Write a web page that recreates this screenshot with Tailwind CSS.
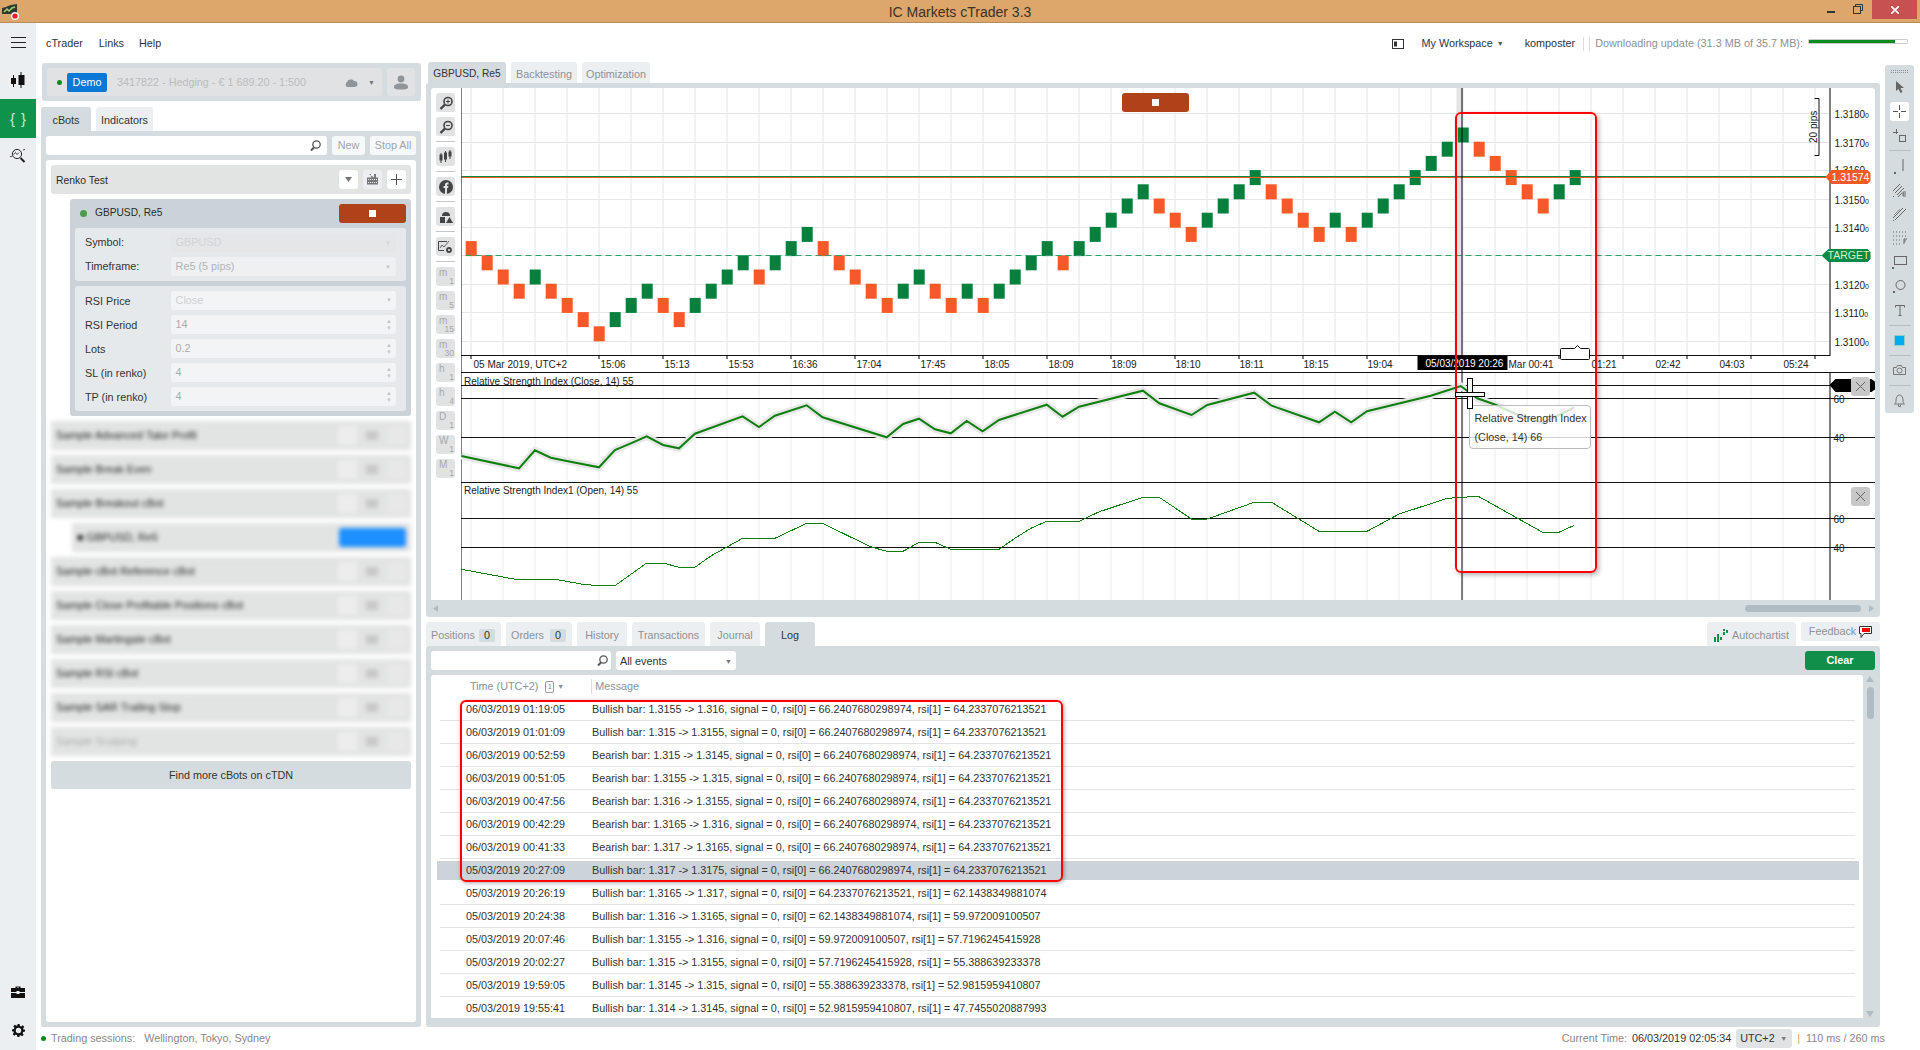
<!DOCTYPE html>
<html lang="en">
<head>
    <meta charset="UTF-8">
    <meta name="viewport" content="width=device-width, initial-scale=1.0">
    <script src="https://cdn.jsdelivr.net/npm/@tailwindcss/browser@4"></script>
    <title>IC Markets cTrader 3.3</title>
</head>
<body class="w-[1920px] h-[1050px] overflow-hidden bg-white text-[#333] text-[10.8px] leading-none font-['Liberation_Sans',sans-serif]">

    <!-- title bar -->
    <div class="h-[23px] bg-[#dda66b] border-b border-[#b58c5c] flex items-center relative">
        <svg class="w-[17px] h-[17px] ml-[2px]" viewBox="0 0 17 17">
            <path d="M0 5l4-1 2-1 3-1 6-1v10H0z" fill="#2f3b30"/>
            <path d="M2 9l3-3 2 2 3-3 3-1" fill="none" stroke="#9ccf7a" stroke-width="1.5"/>
            <circle cx="13" cy="13" r="4" fill="#f2f2f2"/>
            <circle cx="13" cy="13" r="2.6" fill="#d8232a"/>
        </svg>
        <div class="absolute left-0 right-0 pt-px text-center text-[14px] text-[#3a3226]">IC Markets cTrader 3.3</div>
        <div class="ml-auto flex items-start self-start relative">
            <div class="w-[8px] h-[2px] bg-[#333] mt-[11px] mr-[18px]"></div>
            <svg class="w-[10px] h-[10px] mt-[4px] mr-[9px]" viewBox="0 0 10 10" fill="none" stroke="#333"><path d="M2.5 2.5V.5h7v6h-2"/><rect x=".5" y="2.5" width="7" height="7"/></svg>
            <div class="w-[45px] h-[19px] mr-[3px] bg-[#c75050] flex items-center justify-center">
                <svg class="w-[8px] h-[8px]" viewBox="0 0 8 8" stroke="#fff" stroke-width="1.6"><path d="M0 0l8 8M8 0l-8 8"/></svg>
            </div>
        </div>
    </div>

    <div class="flex h-[1027px]">
        <!-- left rail -->
        <div class="w-[36px] bg-[#eceff2] flex flex-col items-center shrink-0">
            <svg class="w-[15px] h-[11px] mt-[14px]" viewBox="0 0 15 11" stroke="#222"><path d="M0 .5h15M0 5.500h15M0 10.500h15"/></svg>
            <svg class="w-[16px] h-[18px] mt-[23px]" viewBox="0 0 16 18" fill="#111"><path d="M3 4h1v3h2v6H4v3H3v-3H1V7h2z"/><path d="M10 1h1v3h3v10h-3v3h-1v-3H8V4h2z" transform="translate(.5 0)"/></svg>
            <div class="w-[36px] h-[39px] bg-[#0f9249] mt-[10px] flex items-center justify-center text-[#c8ead4] text-[15px] tracking-[6px]"><span class="ml-[6px]">{}</span></div>
            <svg class="w-[16px] h-[15px] mt-[10px]" viewBox="0 0 16 15" fill="none" stroke="#222"><circle cx="7" cy="6" r="4.6"/><path d="M3.5 6.5l2-2 1.5 2 2-2" stroke-width=".8"/><path d="M10.5 10l4 4" stroke-width="2"/><path d="M0 8.5h2M13 2l2-.5" stroke-width=".8"/></svg>
            <svg class="w-[14px] h-[12px] mt-auto" viewBox="0 0 14 12" fill="#111"><path d="M4.5 2V.5h5V2H14v4H8.5V5h-3v1H0V2zM6 1.5V2h2v-.5zM0 7h5.5v1h3V7H14v5H0z"/></svg>
            <svg class="w-[13px] h-[13px] mt-[26px] mb-[13px]" viewBox="0 0 24 24" fill="#111"><path d="M10 0h4l.6 3.4 2.3 1 2.9-2 2.8 2.8-2 2.9 1 2.3L24 10v4l-3.4.6-1 2.3 2 2.9-2.8 2.8-2.9-2-2.3 1L14 24h-4l-.6-3.4-2.3-1-2.9 2-2.8-2.8 2-2.9-1-2.3L0 14v-4l3.4-.6 1-2.3-2-2.9 2.8-2.8 2.9 2 2.3-1zM12 7a5 5 0 100 10 5 5 0 000-10z"/></svg>
        </div>

        <div class="flex-1 flex flex-col">
            <!-- menu row -->
            <div class="h-[39px] flex items-center shrink-0 pt-[2px] text-[#2b3440]">
                <span class="ml-[10px]">cTrader</span>
                <span class="ml-[16px]">Links</span>
                <span class="ml-[15px]">Help</span>
                <svg class="w-[12px] h-[10px] ml-auto" viewBox="0 0 12 10" fill="none" stroke="#333"><rect x=".5" y=".5" width="11" height="9"/><path d="M2 2.5h3v5H2z" fill="#333" stroke="none"/></svg>
                <span class="ml-[18px]">My Workspace</span>
                <span class="ml-[4px] text-[7px] text-[#555]">▼</span>
                <span class="ml-[21px]">komposter</span>
                <div class="w-px h-[14px] bg-[#ddd] ml-[8px]"></div>
                <div class="w-px h-[14px] bg-[#ddd] ml-[5px]"></div>
                <span class="ml-[5px] text-[#8b9298] tracking-[.02px]">Downloading update (31.3 MB of 35.7 MB):</span>
                <div class="w-[100px] h-[5px] ml-[5px] mr-[12px] mb-[4px] border border-[#ccc] rounded-[1px]"><div class="w-[86px] h-full bg-[#0a8a1f]"></div></div>
            </div>

            <div class="flex h-[965px]">
                <!-- cBots panel -->
                <div class="w-[380px] ml-[5px] flex flex-col shrink-0">
                    <div class="h-[38px] ml-px mt-px bg-[#d5dce0] rounded-[3px] flex items-center pl-[5px] pr-[5px] shrink-0">
                        <div class="w-[335px] h-[28px] bg-[#e0e2e4] rounded-[3px] flex items-center">
                            <div class="w-[5px] h-[5px] rounded-full bg-[#0a8a1f] ml-[10px]"></div>
                            <div class="w-[40px] h-[19px] bg-[#0a78d6] text-white rounded-[2px] flex items-center justify-center ml-[5px]">Demo</div>
                            <span class="ml-[10px] text-[#b9bdc0]">3417822 - Hedging - € 1 689.20 - 1:500</span>
                            <svg class="w-[14px] h-[9px] ml-[38px]" viewBox="0 0 14 9" fill="#8f9599"><path d="M3 9a3 3 0 010-5 4 4 0 017-1 3 3 0 011 6z"/></svg>
                            <span class="ml-[10px] text-[7px] text-[#777]">▼</span>
                        </div>
                        <div class="w-[28px] h-[28px] bg-[#e0e2e4] rounded-[3px] ml-[5px] flex items-center justify-center">
                            <svg class="w-[14px] h-[15px]" viewBox="0 0 14 15" fill="#8f9599"><circle cx="7" cy="4" r="3.4"/><path d="M0 11c1-2 4-2.500 7-2.500s6 .5 7 2.500v2c-2 2-12 2-14 0z"/></svg>
                        </div>
                    </div>

                    <div class="flex h-[24px] mt-[6px] shrink-0 pt-0">
                        <div class="w-[50px] pt-[3px] bg-[#d5dce0] rounded-t-[3px] flex items-center justify-center">cBots</div>
                        <div class="w-[57px] pt-[3px] ml-[5px] bg-[#eceff2] rounded-t-[3px] flex items-center justify-center">Indicators</div>
                    </div>

                    <div class="flex-1 bg-[#d5dce0] rounded-b-[3px] rounded-tr-[3px] p-[5px] flex flex-col">
                        <div class="flex h-[19px] shrink-0">
                            <div class="w-[281px] bg-white rounded-[3px] flex items-center justify-end pr-[6px]">
                                <svg class="w-[11px] h-[11px]" viewBox="0 0 11 11" fill="none" stroke="#555"><circle cx="6.500" cy="4.500" r="3.700" stroke-width="1.300"/><path d="M4 7.500l-3 3" stroke-width="2"/></svg>
                            </div>
                            <div class="w-[33px] ml-[5px] bg-[#f7f8f9] rounded-[3px] text-[#a0a5a8] flex items-center justify-center">New</div>
                            <div class="w-[46px] ml-[5px] bg-[#f7f8f9] rounded-[3px] text-[#a0a5a8] flex items-center justify-center">Stop All</div>
                        </div>

                        <div class="flex-1 mt-[5px] bg-white rounded-[3px] p-[5px] flex flex-col">
                            <!-- Renko Test row -->
                            <div class="h-[29px] bg-[#e2e3e3] rounded-[3px] flex items-center pl-[2px] pr-[5px] shrink-0">
                                <span class="ml-[3px] mt-[3px] text-[10.4px] text-[#2b2b2b]">Renko Test</span>
                                <div class="w-[19px] h-[19px] ml-auto bg-white rounded-[3px] flex items-center justify-center">
                                    <svg class="w-[7px] h-[5px]" viewBox="0 0 7 5" fill="#777"><path d="M0 0h7L3.500 5z"/></svg>
                                </div>
                                <div class="w-[19px] h-[19px] ml-[5px] bg-[#eceff2] rounded-[3px] flex items-center justify-center">
                                    <svg class="w-[11px] h-[11px]" viewBox="0 0 11 11" fill="#777"><path d="M2 0h2v3l1 .5H0v7h11v-7H6L7 3V0h2v3.500H7M1 5h1v1H1zm2 0h1v1H3zm2 0h1v1H5zm2 0h1v1H7zm2 0h1v1H9zM1 8h1v1H1zm2 0h1v1H3zm2 0h1v1H5zm2 0h1v1H7zm2 0h1v1H9z" fill-rule="evenodd"/></svg>
                                </div>
                                <div class="w-[19px] h-[19px] ml-[5px] bg-white rounded-[3px] flex items-center justify-center">
                                    <svg class="w-[11px] h-[11px]" viewBox="0 0 11 11" stroke="#555"><path d="M5.500 0v11M0 5.500h11"/></svg>
                                </div>
                            </div>

                            <!-- running instance -->
                            <div class="ml-[19px] mt-[5px] h-[217px] bg-[#cbd3d8] rounded-[3px] shrink-0 flex flex-col">
                                <div class="h-[29px] flex items-center pl-[10px] pr-[5px] shrink-0">
                                    <div class="w-[7px] h-[7px] rounded-full bg-[#4c9a4c]"></div>
                                    <span class="ml-[8px] text-[10.2px] text-[#2b2b2b]">GBPUSD, Re5</span>
                                    <div class="w-[67px] h-[19px] ml-auto bg-[#b0421a] rounded-[3px] flex items-center justify-center"><div class="w-[7px] h-[7px] bg-white"></div></div>
                                </div>
                                <div class="mx-[5px] h-[53px] bg-[#e6e9ec] rounded-[3px] px-[10px] pt-[5px] shrink-0">
                                    <div class="flex items-center h-[19px]">
                                        <span class="w-[87px]">Symbol:</span>
                                        <div class="w-[229px] h-[19px] bg-[#e4e6e8] rounded-[3px] flex items-center justify-between pl-[5px] pr-[5px] text-[#d2d4d6]">GBPUSD<span class="text-[6px]">▼</span></div>
                                    </div>
                                    <div class="flex items-center h-[19px] mt-[5px]">
                                        <span class="w-[87px]">Timeframe:</span>
                                        <div class="w-[229px] h-[19px] bg-[#eef0f2] rounded-[3px] flex items-center justify-between pl-[5px] pr-[5px] text-[#b0b4b7]">Re5 (5 pips)<span class="text-[6px] text-[#c4c7ca]">▼</span></div>
                                    </div>
                                </div>
                                <div id="params" class="mx-[5px] mt-[5px] h-[125px] bg-[#e6e9ec] rounded-[3px] px-[10px] pt-[5px] shrink-0 flex flex-col gap-[5px]"></div>
                            </div>

                            <!-- other cBots, blurred in the picture -->
                            <div id="blurred" class="mt-[5px] h-[336px] overflow-hidden blur-[2px] shrink-0 flex flex-col gap-[5px]"></div>

                            <div class="h-[28px] mt-[4px] bg-[#d5dce0] rounded-[3px] flex items-center justify-center shrink-0">Find more cBots on cTDN</div>
                        </div>
                    </div>
                </div>

                <!-- chart column -->
                <div class="w-[1454px] ml-[5px] flex flex-col shrink-0">
                    <div class="flex h-[21px] shrink-0 text-[#8b9298]">
                        <div class="w-[78px] ml-[2px] pt-[3px] text-[10.2px] bg-[#d5dce0] rounded-t-[3px] text-[#333] flex items-center justify-center">GBPUSD, Re5</div>
                        <div class="w-[66px] ml-[5px] pt-[3px] bg-[#eceff2] rounded-t-[3px] flex items-center justify-center">Backtesting</div>
                        <div class="w-[68px] ml-[5px] pt-[3px] bg-[#eceff2] rounded-t-[3px] flex items-center justify-center">Optimization</div>
                    </div>

                    <div class="h-[534px] bg-[#d5dce0] rounded-[3px] px-[5px] pt-[5px] shrink-0">
                        <div class="relative h-[512px] w-[1444px] bg-white rounded-t-[3px] flex">
                            <!-- chart toolbar -->
                            <div id="chart-tools" class="w-[29.500px] shrink-0 pl-[5px] pt-[5px] flex flex-col"></div>
                            <svg id="chart" class="w-[1414.500px] h-[512px] shrink-0" viewBox="460.500 88 1414.500 512" font-size="10" fill="#222"></svg>

                            <!-- overlays on the chart -->
                            <div class="absolute left-[691px] top-[5px] w-[67px] h-[19px] bg-[#b0421a] rounded-[3px] flex items-center justify-center"><div class="w-[7px] h-[7px] bg-white"></div></div>
                            <div class="absolute left-[1420px] top-[289px] w-[19px] h-[19px] bg-[#c8c8c8] rounded-[3px] flex items-center justify-center"><svg class="w-[11px] h-[11px]" viewBox="0 0 11 11" stroke="#666"><path d="M1 1l9 9M10 1l-9 9"/></svg></div>
                            <div class="absolute left-[1420px] top-[399px] w-[19px] h-[19px] bg-[#c8c8c8] rounded-[3px] flex items-center justify-center"><svg class="w-[11px] h-[11px]" viewBox="0 0 11 11" stroke="#666"><path d="M1 1l9 9M10 1l-9 9"/></svg></div>
                            <div class="absolute left-[1037.500px] top-[317px] w-[122px] h-[44px] bg-white/80 border border-[#bbb] rounded-[4px] pl-[5px] pt-[3px] leading-[19px]">Relative Strength Index<br>(Close, 14) 66</div>
                            <div class="absolute left-[1024px] top-[24px] w-[142px] h-[461px] border-[2.500px] border-[#f00] rounded-[6px] shadow-[2px_2px_5px_rgba(0,0,0,.3)]"></div>
                            <div class="absolute left-[1036px] top-[290px] w-[6px] h-[31px] bg-white border-[1.500px] border-black"></div>
                            <div class="absolute left-[1024px] top-[304px] w-[30px] h-[5px] bg-white border-[1.500px] border-black"></div>
                        </div>
                        <div class="h-[17px] relative flex items-center">
                            <svg class="w-[5px] h-[7px] ml-[2px]" viewBox="0 0 5 7" fill="#b0bcc3"><path d="M5 0v7L0 3.500z"/></svg>
                            <div class="w-[116px] h-[7px] ml-auto mr-[8px] bg-[#b0bcc3] rounded-full"></div>
                            <svg class="w-[5px] h-[7px] mr-[1px]" viewBox="0 0 5 7" fill="#b0bcc3"><path d="M0 0v7l5-3.500z"/></svg>
                        </div>
                    </div>

                    <!-- log tabs -->
                    <div class="flex h-[24px] mt-[5px] shrink-0 text-[#8b9298]">
                        <div class="w-[75px] pt-[3px] bg-[#eceff2] rounded-t-[3px] flex items-center pl-[5px]">Positions<span class="w-[16px] h-[13px] ml-auto mr-[6px] bg-[#d5dce0] rounded-[2px] text-[#333] flex items-center justify-center">0</span></div>
                        <div class="w-[66px] pt-[3px] ml-[5px] bg-[#eceff2] rounded-t-[3px] flex items-center pl-[5px]">Orders<span class="w-[16px] h-[13px] ml-auto mr-[6px] bg-[#d5dce0] rounded-[2px] text-[#333] flex items-center justify-center">0</span></div>
                        <div class="w-[50px] pt-[3px] ml-[5px] bg-[#eceff2] rounded-t-[3px] flex items-center justify-center">History</div>
                        <div class="w-[73px] pt-[3px] ml-[5px] bg-[#eceff2] rounded-t-[3px] flex items-center justify-center">Transactions</div>
                        <div class="w-[50px] pt-[3px] ml-[5px] bg-[#eceff2] rounded-t-[3px] flex items-center justify-center">Journal</div>
                        <div class="w-[50px] pt-[3px] ml-[5px] bg-[#d5dce0] rounded-t-[3px] text-[#333] flex items-center justify-center">Log</div>
                        <div class="w-[89px] pt-[3px] ml-auto bg-[#eceff2] rounded-t-[3px] flex items-center justify-center">
                            <svg class="w-[15px] h-[13px] mr-[3px]" viewBox="0 0 15 13" fill="#0f9249"><path d="M0 8h2v5H0zM3 5h2v8H3zM6 8h2v3H6zM9 0h2v2H9zM9 3h2v3H9zM12 1h2v3h-2z"/></svg>Autochartist
                        </div>
                        <div class="w-[79px] h-[19px] ml-[5px] bg-[#eceff2] rounded-[3px] flex items-center justify-center">Feedback
                            <svg class="w-[13px] h-[12px] ml-[3px]" viewBox="0 0 13 12"><path d="M.5.500h12v7H5l-3 4v-4H.5z" fill="#fff" stroke="#333"/><rect x="3" y="2" width="8" height="4" fill="#f00"/></svg>
                        </div>
                    </div>

                    <!-- log panel -->
                    <div class="relative h-[381px] bg-[#d5dce0] rounded-[3px] flex flex-col shrink-0">
                        <div class="h-[29px] flex items-center pl-[5px] pr-[5px] shrink-0">
                            <div class="w-[180px] h-[19px] bg-white rounded-[3px] flex items-center justify-end pr-[3px]">
                                <svg class="w-[11px] h-[11px]" viewBox="0 0 11 11" fill="none" stroke="#555"><circle cx="6.500" cy="4.500" r="3.700" stroke-width="1.300"/><path d="M4 7.500l-3 3" stroke-width="2"/></svg>
                            </div>
                            <div class="w-[120px] h-[19px] ml-[5px] pt-px bg-white rounded-[3px] flex items-center justify-between pl-[4px] pr-[4px]">All events<span class="text-[7px] text-[#777]">▼</span></div>
                            <div class="w-[70px] h-[19px] ml-auto bg-[#0f8f4a] rounded-[3px] text-white font-bold flex items-center justify-center">Clear</div>
                        </div>
                        <div class="flex h-[343px] shrink-0">
                            <div class="w-[1432px] ml-[5px] bg-white rounded-t-[3px] shrink-0 overflow-hidden">
                                <div class="h-[23px] flex items-center text-[#8b9298]">
                                    <span class="ml-[39px]">Time (UTC+2)</span>
                                    <span class="w-[9px] h-[12px] ml-[7px] border border-[#999] rounded-[2px] text-[8px] flex items-center justify-center">1</span>
                                    <span class="ml-[3px] text-[7px]">▼</span>
                                    <div class="w-px h-[15px] bg-[#ddd] ml-[27px]"></div>
                                    <span class="ml-[3px]">Message</span>
                                </div>
                                <div id="log" class="flex flex-col"></div>
                            </div>
                            <div class="flex-1 flex flex-col items-center pt-[1px] pr-[3px]">
                                <svg class="w-[8px] h-[6px]" viewBox="0 0 8 6" fill="#b0bcc3"><path d="M0 6h8L4 0z"/></svg>
                                <div class="w-[7px] h-[32px] mt-[5px] bg-[#b0bcc3] rounded-full"></div>
                                <svg class="w-[8px] h-[6px] mt-auto mb-[1px]" viewBox="0 0 8 6" fill="#b0bcc3"><path d="M0 0h8L4 6z"/></svg>
                            </div>
                        </div>
                        <div class="absolute left-[34px] top-[54px] w-[603px] h-[182px] border-2 border-[#f00] rounded-[6px] shadow-[1px_1px_4px_rgba(0,0,0,.35)]"></div>
                    </div>
                </div>

                <!-- drawing toolbar -->
                <div class="w-[29px] h-[348px] ml-[5px] mt-[3px] bg-[#d5dce0] rounded-[3px] flex flex-col items-center shrink-0 text-[#666]">
                    <svg class="w-[20px] h-[10px] shrink-0" viewBox="0 0 20 10" fill="#8a9298"><path d="M1 5h1v1H1zm2 0h1v1H3zm2 0h1v1H5zm2 0h1v1H7zm2 0h1v1H9zm2 0h1v1h-1zm2 0h1v1h-1zm2 0h1v1h-1zm2 0h1v1h-1zM1 7h1v1H1zm2 0h1v1H3zm2 0h1v1H5zm2 0h1v1H7zm2 0h1v1H9zm2 0h1v1h-1zm2 0h1v1h-1zm2 0h1v1h-1zm2 0h1v1h-1z"/></svg>
                    <div class="h-[24px] flex items-center justify-center"><svg class="w-[10px] h-[12px]" viewBox="0 0 10 12" fill="#666"><path d="M1 0l8 7H5.500l2 4-2 1-2-4L1 10z"/></svg></div>
                    <div class="h-[19px] w-[19px] my-[2.500px] bg-white rounded-[3px] flex items-center justify-center"><svg class="w-[13px] h-[13px]" viewBox="0 0 13 13" stroke="#555"><path d="M6.500 0v5M6.500 8v5M0 6.500h5M8 6.500h5"/></svg></div>
                    <div class="h-[24px] flex items-center justify-center"><svg class="w-[13px] h-[13px]" viewBox="0 0 13 13" fill="none" stroke="#666"><path d="M3.500 0v5M0 3.500h5"/><rect x="6.500" y="6.500" width="6" height="6"/></svg></div>
                    <div class="w-[22px] h-px bg-[#b5bdc2] my-[3px] shrink-0"></div>
                    <div class="h-[24px] flex items-center justify-center"><svg class="w-[11px] h-[15px]" viewBox="0 0 11 15" stroke="#666" fill="#666"><path d="M9 0v12" fill="none"/><rect x="0" y="13" width="2" height="2" stroke="none"/></svg></div>
                    <div class="h-[24px] flex items-center justify-center"><svg class="w-[15px] h-[14px]" viewBox="0 0 15 14" fill="none" stroke="#666"><path d="M1 8l7-7M3 10l7-7M5 12l7-7M6 14l4-4M1 14l1-1"/><path d="M11 9h3M11 11h3M11 13h3M11 9v4"/></svg></div>
                    <div class="h-[24px] flex items-center justify-center"><svg class="w-[13px] h-[13px]" viewBox="0 0 13 13" fill="none" stroke="#666"><path d="M0 10l10-10M2 12L13 1M0 13l1-1"/><path d="M1 7l6-6" stroke-width=".6"/></svg></div>
                    <div class="h-[24px] flex items-center justify-center"><svg class="w-[15px] h-[15px]" viewBox="0 0 15 15" fill="none" stroke="#666" stroke-dasharray="1 2"><path d="M1 1h14M1 5h14M1 9h9M1 13h9"/><path d="M12 8h3M12 8v5M12 10h2" stroke-dasharray="none"/></svg></div>
                    <div class="h-[24px] flex items-center justify-center"><svg class="w-[15px] h-[13px]" viewBox="0 0 15 13" fill="none" stroke="#666"><rect x="2.500" y=".5" width="12" height="8"/><rect x="0" y="11" width="2" height="2" fill="#666" stroke="none"/></svg></div>
                    <div class="h-[24px] flex items-center justify-center"><svg class="w-[13px] h-[13px]" viewBox="0 0 13 13" fill="none" stroke="#666"><circle cx="7.500" cy="5" r="4.500"/><rect x="0" y="11" width="2" height="2" fill="#666" stroke="none"/></svg></div>
                    <div class="h-[24px] flex items-center justify-center"><svg class="w-[10px] h-[11px]" viewBox="0 0 10 11" fill="none" stroke="#666"><path d="M.5 2.500V.5h9v2M5 .5v10M3.500 10.500h3"/></svg></div>
                    <div class="w-[22px] h-px bg-[#b5bdc2] my-[2.500px] shrink-0"></div>
                    <div class="h-[24px] flex items-center justify-center"><div class="w-[11px] h-[11px] bg-[#00adef] border border-[#9cc]"></div></div>
                    <div class="w-[22px] h-px bg-[#b5bdc2] my-[2.500px] shrink-0"></div>
                    <div class="h-[24px] flex items-center justify-center"><svg class="w-[13px] h-[10px]" viewBox="0 0 13 10" fill="none" stroke="#777"><path d="M.5 2.500h3l1-2h4l1 2h3v7h-12z"/><circle cx="6.500" cy="5.500" r="2.500"/></svg></div>
                    <div class="w-[22px] h-px bg-[#b5bdc2] my-[2.500px] shrink-0"></div>
                    <div class="h-[24px] flex items-center justify-center"><svg class="w-[11px] h-[13px]" viewBox="0 0 11 13" fill="none" stroke="#777"><path d="M.5 10c1.500-1 1.500-2 1.500-4 0-3 1.500-5 3.500-5s3.500 2 3.500 5c0 2 0 3 1.500 4zM4.500 10.500v2h2v-2"/></svg></div>
                </div>
            </div>

            <!-- status bar -->
            <div class="h-[23px] flex items-center text-[#888]">
                <div class="w-[5px] h-[5px] ml-[5px] rounded-full bg-[#0a8a1f]"></div>
                <span class="ml-[5px]">Trading sessions:</span>
                <span class="ml-[9px]">Wellington, Tokyo, Sydney</span>
                <span class="ml-auto">Current Time:</span>
                <span class="ml-[5px] text-[#333]">06/03/2019 02:05:34</span>
                <div class="w-[56px] h-[19px] ml-[5px] bg-[#e0e2e4] rounded-[3px] text-[#333] flex items-center justify-between pl-[4px] pr-[5px]">UTC+2<span class="text-[7px] text-[#777]">▼</span></div>
                <span class="ml-[5px] text-[#d9a066]">|</span>
                <span class="ml-[6px] mr-[35px]">110 ms / 260 ms</span>
            </div>
        </div>
    </div>

    <script>
        // renko bars: [colour, level], level 0 sits on the 1.3180 grid line
        const bars = 'O9 O10 O11 O12 G11 O12 O13 O14 O15 G14 G13 G12 O13 O14 G13 G12 G11 G10 O11 G10 G9 G8 O9 O10 O11 O12 O13 G12 G11 O12 O13 G12 O13 G12 G11 G10 G9 O10 G9 G8 G7 G6 G5 O6 O7 O8 G7 G6 G5 G4 O5 O6 O7 O8 G7 O8 G7 G6 G5 G4 G3 G2 G1 O2 O3 O4 O5 O6 G5 G4'.split(' ');
        const timeLabels = [[473, '05 Mar 2019, UTC+2'], [600, '15:06'], [664, '15:13'], [728, '15:53'], [792, '16:36'], [856, '17:04'], [920, '17:45'], [984, '18:05'], [1048, '18:09'], [1111, '18:09'], [1175, '18:10'], [1239, '18:11'], [1303, '18:15'], [1367, '19:04'], [1508, 'Mar 00:41'], [1591, '01:21'], [1655, '02:42'], [1719, '04:03'], [1783, '05:24']];
        const prices = [[114, '1.3180'], [143, '1.3170'], [200, '1.3150'], [228, '1.3140'], [285, '1.3120'], [313, '1.3110'], [342, '1.3100']];
        const rsiClose = '460.9,456 518.5,468.3 534.4,450.3 550.3,457.7 566.2,461 598.5,467.3 614.4,450 630.3,443.3 646.2,436.3 662.6,445 678.5,448.3 694.4,433.7 742.1,416.3 758.5,427 774.4,415.7 806.2,405.3 822.1,417.3 886.2,437.3 902.6,424 918.5,418.7 934.4,429.3 950.3,433.3 966.2,421 982.1,431.3 998.5,420 1046.2,404.7 1062.1,416.7 1078.6,406.7 1142.4,390.7 1158.8,403.3 1191,415 1206.8,405 1253.7,392.7 1271.1,405.7 1318.5,422.3 1334.4,411.7 1350.7,422.3 1366.5,411.3 1430.3,395.7 1460.3,386 1476.7,398.3 1495.7,405 1517.6,415 1542,422.7 1558.4,415 1573.7,407.3';
        const rsiOpen = '460.9,569.3 514.8,579.3 554.8,579.3 582.1,584.3 598.5,585.7 614.4,585.7 646.2,563 662.6,563 678.5,567.3 694.4,567.3 710.3,556 742.1,538.3 774.4,538.3 806.2,523.3 822.1,523.3 869.9,546.7 886.2,551.3 902.6,551.3 918.5,542.3 934.4,542.3 950.3,549.3 998.5,549.3 1014.4,538.3 1030.3,528.3 1046.2,521.3 1078.6,521.3 1098.8,511.7 1142.4,497.3 1158.8,497.3 1191,519 1206.8,519 1253.7,502.3 1271.1,502.3 1318.5,531.3 1366.5,531.3 1398.7,514 1446.7,498.3 1477.8,496.3 1542.1,532.3 1558.4,532.3 1573.7,525.3';

        function drawChart() {
            let s = '';
            // grid
            for (let x = 470.5; x < 1829; x += 32) {
                s += `<path d="M${x} 88V355" stroke="#e6e6e6"/><path d="M${x} 373V600" stroke="#ececec"/>`;
            }
            [113.5, 142.5, 170.5, 199.5, 227.5, 255.5, 284.5, 312.5, 341.5].forEach(y => {
                s += `<path d="M461 ${y}H1829" stroke="#e6e6e6"/>`;
            });

            // shade left by the red box on the candle side
            s += `<rect x="1456" y="88" width="6" height="267" fill="#e4e4e4"/>`;

            // renko bars
            bars.forEach((b, i) => {
                const x = 470.7 + 16 * i - 5.5;
                const y = 113.3 + 14.2 * parseInt(b.slice(1));
                s += `<rect x="${x}" y="${y}" width="11" height="15" fill="${b[0] === 'G' ? '#00823c' : '#f45a24'}"/>`;
            });

            // position and target lines
            s += `<path d="M461 176.500H1826" stroke="#0a8a3c"/><path d="M461 177.500H1826" stroke="#f45a24"/>`;
            s += `<path d="M465 255.500H1822" stroke="#2e9e6b" stroke-dasharray="6 4"/>`;

            // axes and pane borders
            s += `<path d="M460.500 88V600M1829.500 88V355M1829.500 372V600M1461.500 88V600" stroke="#000"/>`;
            s += `<path d="M460 355.500H1830M460 372.500H1875M460 385.500H1875M460 398.500H1875M460 437.500H1875M460 482.500H1875M460 518.500H1875M460 547.500H1875" stroke="#111"/>`;

            for (let x = 470.5; x < 1829; x += 64) {
                if (x > 480 && x < 590) continue;
                s += `<path d="M${x} 355V359" stroke="#000"/>`;
            }
            timeLabels.forEach(([x, t]) => { s += `<text x="${x}" y="368">${t}</text>`; });
            prices.forEach(([y, t]) => { s += `<text x="1834" y="${y + 3.5}" font-size="10">${t}<tspan font-size="7">0</tspan></text>`; });
            s += `<text x="1834" y="174" font-size="10">1.3160</text>`;

            // price tags
            s += `<path d="M1825 177l6-7h36l3 3v8l-3 3h-36z" fill="#f45a24"/><text x="1831" y="181" fill="#fff" font-size="10.500">1.31574</text>`;
            s += `<path d="M1821 255.500l7-6.500h39l3 3v7l-3 3h-39z" fill="#0a8a48"/><text x="1827" y="259" fill="#d8f0c0" font-size="10.500">TARGET</text>`;

            // crosshair tag and pane scale
            s += `<path d="M1829 385l6-6h36l4 3v7l-4 3h-36z" fill="#000"/>`;
            [[403, '60'], [442, '40'], [523, '60'], [552, '40']].forEach(([y, t]) => { s += `<text x="1833" y="${y}">${t}</text>`; });

            // crosshair date
            s += `<rect x="1417" y="356" width="90" height="14" fill="#000"/><text x="1425" y="367" fill="#fff">05/03/2019 20:26</text>`;

            // 20 pips ruler and zoom handle
            s += `<path d="M1814 98.500h4.500v57h-4.500" fill="none" stroke="#111"/><text transform="translate(1816 143) rotate(-90)">20 pips</text>`;
            s += `<path d="M1561 348.500h13l3-3 3 3h8q1 0 1 1v9q0 1-1 1h-27q-1 0-1-1v-9q0-1 1-1z" fill="#fff" stroke="#111"/>`;

            // indicator lines
            s += `<polyline points="${rsiClose}" fill="none" stroke="#e8e8e8" stroke-width="7"/>`;
            s += `<polyline points="${rsiClose}" fill="none" stroke="#0d7f0d" stroke-width="2"/>`;
            s += `<polyline points="${rsiOpen}" fill="none" stroke="#0d7f0d" stroke-width="1" shape-rendering="crispEdges"/>`;

            // pane titles
            s += `<text x="463.500" y="384.500">Relative Strength Index (Close, 14) 55</text>`;
            s += `<text x="463.500" y="494">Relative Strength Index1 (Open, 14) 55</text>`;

            document.getElementById('chart').innerHTML = s;
        }

        // toolbar on the left of the chart
        function toolButton(inner) {
            return `<div class="w-[19px] h-[19px] bg-[#e0e2e4] rounded-[3px] flex items-center justify-center shrink-0">${inner}</div>`;
        }
        function timeframeButton(a, b) {
            return `<div class="w-[19px] h-[19px] mb-[5px] bg-[#e0e2e4] rounded-[3px] relative text-[#a4a9ac] text-[10px] shrink-0"><span class="absolute left-[3px] top-[1px]">${a}</span><span class="absolute right-[1px] bottom-[1px] text-[8.500px]">${b}</span></div>`;
        }
        function drawTools() {
            const sep = '<div class="w-[19px] h-px bg-[#c4c8cb] my-[5px] shrink-0"></div>';
            const loupe = '<circle cx="9" cy="5.500" r="4" fill="none" stroke="#444" stroke-width="1.600"/><path d="M6 8.500l-4.500 4.500" stroke="#444" stroke-width="2.400"/>';
            let t = '';
            t += toolButton(`<svg class="w-[14px] h-[14px]" viewBox="0 0 14 14">${loupe}<path d="M7 5.500h4M9 3.500v4" stroke="#444"/></svg>`);
            t += '<div class="h-[5px] shrink-0"></div>';
            t += toolButton(`<svg class="w-[14px] h-[14px]" viewBox="0 0 14 14">${loupe}<path d="M7 5.500h4" stroke="#444"/></svg>`);
            t += sep;
            t += toolButton('<svg class="w-[13px] h-[14px]" viewBox="0 0 13 14" fill="#444" stroke="#444"><path d="M2 3v10M6.500 1v11M11 0v9" fill="none"/><rect x="1" y="5" width="2" height="5"/><rect x="5.500" y="3" width="2" height="6"/><rect x="10" y="2" width="2" height="4"/></svg>');
            t += sep;
            t += toolButton('<svg class="w-[14px] h-[14px]" viewBox="0 0 14 14"><circle cx="7" cy="7" r="7" fill="#444"/><path d="M6 14V8H4.500V6H6V4.500C6 3 7 2.500 9.500 2.500v2C8.500 4.500 8 4.500 8 5v1h1.500L9 8H8v6z" fill="#e0e2e4"/></svg>');
            t += sep;
            t += toolButton('<svg class="w-[14px] h-[15px]" viewBox="0 0 14 15" fill="#444"><path d="M3 7a4 4 0 018 0z"/><rect x="1" y="8" width="5" height="6"/><path d="M7 14l3.500-6L14 14z"/></svg>');
            t += sep;
            t += toolButton('<svg class="w-[15px] h-[15px]" viewBox="0 0 15 15" fill="none" stroke="#444"><path d="M6 11.500H.5v-9H9"/><path d="M2 9l2-3 2 2 5-6" stroke-width=".8"/><circle cx="11" cy="11" r="2" stroke-width="1.800"/></svg>');
            t += sep;
            [['m', '1'], ['m', '5'], ['m', '15'], ['m', '30'], ['h', '1'], ['h', '4'], ['D', '1'], ['W', '1'], ['M', '1']].forEach(([a, b]) => { t += timeframeButton(a, b); });
            document.getElementById('chart-tools').innerHTML = t;
        }

        // cBot parameters
        function drawParams() {
            const rows = [['RSI Price', 'Close', 1], ['RSI Period', '14', 0], ['Lots', '0.2', 0], ['SL (in renko)', '4', 0], ['TP (in renko)', '4', 0]];
            document.getElementById('params').innerHTML = rows.map(([label, value, isSelect]) => `
                <div class="flex items-center h-[19px]">
                    <span class="w-[87px] pt-[2px]">${label}</span>
                    <div class="w-[229px] h-[19px] bg-[#f3f4f6] rounded-[3px] flex items-center justify-between pl-[5px] pr-[4px] ${isSelect ? 'text-[#cdd0d3]' : 'text-[#a8acaf]'}">${value}
                        <span class="text-[6px] text-[#c4c7ca] leading-[7px] text-center">${isSelect ? '▼' : '▲<br>▼'}</span>
                    </div>
                </div>`).join('');
        }

        // blurred list of the other cBots
        function drawBlurred() {
            const names = ['Sample Advanced Take Profit', 'Sample Break Even', 'Sample Breakout cBot', '*GBPUSD, Re5', 'Sample cBot Reference cBot', 'Sample Close Profitable Positions cBot', 'Sample Martingale cBot', 'Sample RSI cBot', 'Sample SAR Trailing Stop', 'Sample Scalping'];
            document.getElementById('blurred').innerHTML = names.map((n, i) => {
                if (n[0] === '*') {
                    return `<div class="h-[29px] ml-[21px] bg-[#e2e3e3] flex items-center pl-[5px] pr-[5px] shrink-0 text-[#222]"><span>■ ${n.slice(1)}</span><div class="w-[67px] h-[19px] ml-auto bg-[#1e90ff] rounded-[3px]"></div></div>`;
                }
                return `<div class="h-[29px] bg-[#e2e3e3] flex items-center pl-[5px] pr-[5px] shrink-0 ${i === 9 ? 'text-[#aaa]' : 'text-[#222]'}"><span>${n}</span><div class="w-[19px] h-[19px] ml-auto bg-[#ededed]"></div><div class="w-[12px] h-[9px] ml-[9px] bg-[#c8c8c8]"></div><div class="w-[19px] h-[19px] ml-[9px] bg-[#e8e8e8]"></div></div>`;
            }).join('');
        }

        // log rows
        function drawLog() {
            const r66 = '66.2407680298974';
            const r64 = '64.2337076213521';
            const rows = [
                ['06/03/2019 01:19:05', 'Bullish bar: 1.3155 -> 1.316', r66, r64],
                ['06/03/2019 01:01:09', 'Bullish bar: 1.315 -> 1.3155', r66, r64],
                ['06/03/2019 00:52:59', 'Bearish bar: 1.315 -> 1.3145', r66, r64],
                ['06/03/2019 00:51:05', 'Bearish bar: 1.3155 -> 1.315', r66, r64],
                ['06/03/2019 00:47:56', 'Bearish bar: 1.316 -> 1.3155', r66, r64],
                ['06/03/2019 00:42:29', 'Bearish bar: 1.3165 -> 1.316', r66, r64],
                ['06/03/2019 00:41:33', 'Bearish bar: 1.317 -> 1.3165', r66, r64],
                ['05/03/2019 20:27:09', 'Bullish bar: 1.317 -> 1.3175', r66, r64],
                ['05/03/2019 20:26:19', 'Bullish bar: 1.3165 -> 1.317', r64, '62.1438349881074'],
                ['05/03/2019 20:24:38', 'Bullish bar: 1.316 -> 1.3165', '62.1438349881074', '59.972009100507'],
                ['05/03/2019 20:07:46', 'Bullish bar: 1.3155 -> 1.316', '59.972009100507', '57.7196245415928'],
                ['05/03/2019 20:02:27', 'Bullish bar: 1.315 -> 1.3155', '57.7196245415928', '55.388639233378'],
                ['05/03/2019 19:59:05', 'Bullish bar: 1.3145 -> 1.315', '55.388639233378', '52.9815959410807'],
                ['05/03/2019 19:55:41', 'Bullish bar: 1.314 -> 1.3145', '52.9815959410807', '47.7455020887993']
            ];
            document.getElementById('log').innerHTML = rows.map((r, i) => `
                <div class="h-[23px] ${i === 7 ? 'ml-[6px] w-[1422px] pl-[29px] bg-[#ccd4d9] bg-clip-padding border-y-2 border-white' : 'ml-[9px] w-[1415px] pl-[26px] border-b border-[#e3e3e3]'} flex items-center shrink-0">
                    <span class="w-[126px]">${r[0]}</span>
                    <span>${r[1].replace('>', '&gt;')}, signal = 0, rsi[0] = ${r[2]}, rsi[1] = ${r[3]}</span>
                </div>`).join('');
        }

        drawChart();
        drawTools();
        drawParams();
        drawBlurred();
        drawLog();
    </script>
</body>
</html>
